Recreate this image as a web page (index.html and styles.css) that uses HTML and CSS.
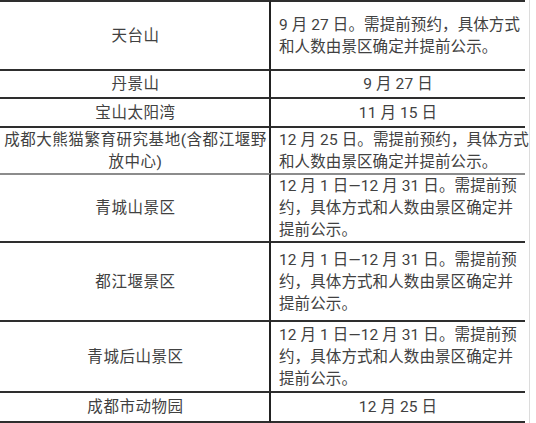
FILE: index.html
```html
<!DOCTYPE html>
<html lang="zh-CN">
<head>
<meta charset="utf-8">
<title>景区开放时间</title>
<link rel="stylesheet" href="styles.css">
</head>
<body>
<div class="frame">
  <div class="table">
    <div class="cell name r1">天台山</div>
    <div class="cell info r1">9 月 27 日。需提前预约，具体方式<br>和人数由景区确定并提前公示。</div>

    <div class="cell name">丹景山</div>
    <div class="cell info center">9 月 27 日</div>

    <div class="cell name">宝山太阳湾</div>
    <div class="cell info center">11 月 15 日</div>

    <div class="cell name">成都大熊猫繁育研究基地(含都江堰野<br>放中心)</div>
    <div class="cell info">12 月 25 日。需提前预约，具体方式<br>和人数由景区确定并提前公示。</div>

    <div class="cell name light">青城山景区</div>
    <div class="cell info light">12 月 1 日—12 月 31 日。需提前预<br>约，具体方式和人数由景区确定并<br>提前公示。</div>

    <div class="cell name">都江堰景区</div>
    <div class="cell info">12 月 1 日—12 月 31 日。需提前预<br>约，具体方式和人数由景区确定并<br>提前公示。</div>

    <div class="cell name">青城后山景区</div>
    <div class="cell info">12 月 1 日—12 月 31 日。需提前预<br>约，具体方式和人数由景区确定并<br>提前公示。</div>

    <div class="cell name last">成都市动物园</div>
    <div class="cell info center last">12 月 25 日</div>
  </div>
</div>
</body>
</html>
```

FILE: styles.css
```css
html, body {
  margin: 0;
  padding: 0;
  background: #ffffff;
}

body {
  font-family: "Roboto", "Noto Sans CJK SC", sans-serif;
  font-size: 15.5px;
  line-height: 22px;
  color: #414141;
  overflow: hidden;
}

.frame {
  width: max-content;
  padding-right: 4px;
  border-right: 1px solid #dcdcdc;
}

.table {
  display: grid;
  grid-template-columns: 271px 254px;
  grid-template-rows: 69px 28px 29px 47px 68px 79px 71px 32px;
}

.cell {
  box-sizing: border-box;
  display: flex;
  align-items: center;
  border-top: 2px solid #2e2e2e;
  white-space: nowrap;
}

.name {
  justify-content: center;
  text-align: center;
  border-right: 2px solid #222222;
  padding-left: 2px;
  letter-spacing: 0.55px;
}

.info {
  padding: 0 4px 0 8px;
  letter-spacing: 0.1px;
}

.info.center {
  justify-content: center;
  padding: 0;
}

.light {
  border-top-color: #8c8c8c;
}

.last {
  border-bottom: 2px solid #2e2e2e;
}
```
